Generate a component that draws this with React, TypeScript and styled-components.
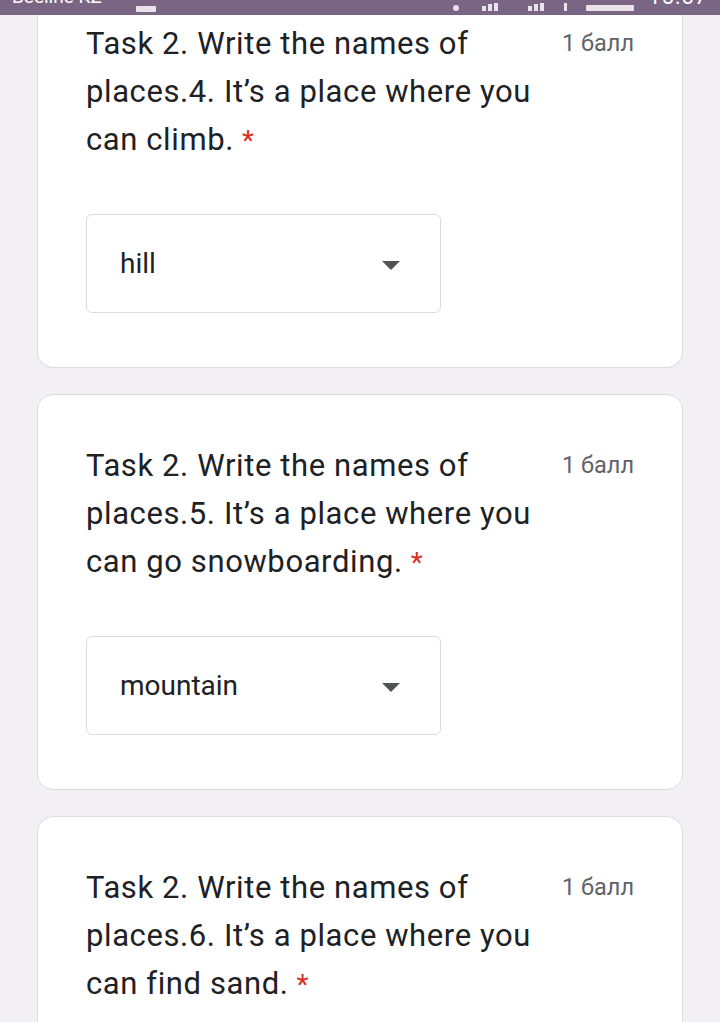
import styled, { createGlobalStyle } from 'styled-components'

const GlobalStyle = createGlobalStyle`
  html, body {
    margin: 0;
    padding: 0;
    background: #f2f0f5;
  }
  body {
    font-family: Roboto, 'Liberation Sans', sans-serif;
    color: #202124;
  }
`

const Page = styled.div`
  width: 720px;
  height: 1022px;
  overflow: hidden;
  background: #f2f0f5;
`

const StatusBar = styled.div`
  height: 15px;
  background: #7a6584;
  display: flex;
  align-items: flex-end;
  padding: 0 12px 8px;
  box-sizing: border-box;
  overflow: hidden;
  color: #fff;
`

const Carrier = styled.span`
  font-size: 19px;
  line-height: 20px;
`

const NotifIcon = styled.span`
  width: 20px;
  height: 6px;
  margin: 0 0 -5px 34px;
  background: #e9e3ec;
  border-radius: 1px;
`

const StatusRight = styled.div`
  margin-left: auto;
  display: flex;
  align-items: flex-end;
  gap: 14px;
  margin-bottom: -4px;
`

const Battery = styled.span`
  width: 48px;
  height: 6px;
  background: #e9e3ec;
  border-radius: 1px;
`

const Clock = styled.span`
  font-size: 22px;
  line-height: 20px;
  letter-spacing: 1px;
  margin-bottom: 4px;
`

const List = styled.div`
  display: flex;
  flex-direction: column;
  gap: 26px;
  padding: 0 37px;
`

const Card = styled.div<{ $clipped?: boolean }>`
  background: #fff;
  border: 1px solid #dadce0;
  border-radius: ${({ $clipped }) => ($clipped ? '0 0 16px 16px' : '16px')};
  border-top: ${({ $clipped }) => ($clipped ? 'none' : '1px solid #dadce0')};
  padding: ${({ $clipped }) => ($clipped ? '5px' : '47px')} 48px 54px;
`

const Header = styled.div`
  display: flex;
  align-items: flex-start;
`

const Title = styled.div`
  flex: 1;
  font-size: 31px;
  letter-spacing: 0.6px;
  line-height: 48px;
  color: #202124;
  padding-right: 22px;
`

const Required = styled.span`
  color: #d93025;
  margin-left: 8px;
  font-size: 28px;
`

const Points = styled.div`
  font-size: 23.5px;
  line-height: 48px;
  color: #5f6368;
  white-space: nowrap;
  margin-top: -1px;
`

const Select = styled.div`
  margin-top: 49px;
  width: 355px;
  height: 99px;
  box-sizing: border-box;
  border: 1px solid #dadce0;
  border-radius: 6px;
  display: flex;
  align-items: center;
  padding: 0 40px 0 33px;
`

const SelectValue = styled.span`
  flex: 1;
  font-size: 28px;
  color: #202124;
`

const Arrow = styled.span`
  width: 0;
  height: 0;
  border-left: 9px solid transparent;
  border-right: 9px solid transparent;
  border-top: 9px solid #4f5556;
  margin-top: 4px;
`

type Question = {
  text: string
  answer?: string
  clipped?: boolean
}

const questions: Question[] = [
  {
    text: 'Task 2. Write the names of places.4. It’s a place where you can climb.',
    answer: 'hill',
    clipped: true,
  },
  {
    text: 'Task 2. Write the names of places.5. It’s a place where you can go snowboarding.',
    answer: 'mountain',
  },
  {
    text: 'Task 2. Write the names of places.6. It’s a place where you can find sand.',
  },
]

export default function App() {
  return (
    <Page>
      <GlobalStyle />
      <StatusBar>
        <Carrier>Beeline KZ</Carrier>
        <NotifIcon />
        <StatusRight>
          <svg width="120" height="8" viewBox="0 0 120 8">
            <g fill="#e9e3ec">
              <path d="M30 8h4V3h-4zM36 8h4V1h-4zM42 8h4V0h-4z" />
              <path d="M76 8h4V3h-4zM82 8h4V1h-4zM88 8h4V0h-4z" />
              <path d="M112 8h3V0h-3z" />
              <circle cx="4" cy="5" r="3" />
            </g>
          </svg>
          <Battery />
          <Clock>15:57</Clock>
        </StatusRight>
      </StatusBar>
      <List>
        {questions.map((q, i) => (
          <Card key={i} $clipped={q.clipped}>
            <Header>
              <Title>
                {q.text}
                <Required>*</Required>
              </Title>
              <Points>1 балл</Points>
            </Header>
            {q.answer && (
              <Select>
                <SelectValue>{q.answer}</SelectValue>
                <Arrow />
              </Select>
            )}
          </Card>
        ))}
      </List>
    </Page>
  )
}
